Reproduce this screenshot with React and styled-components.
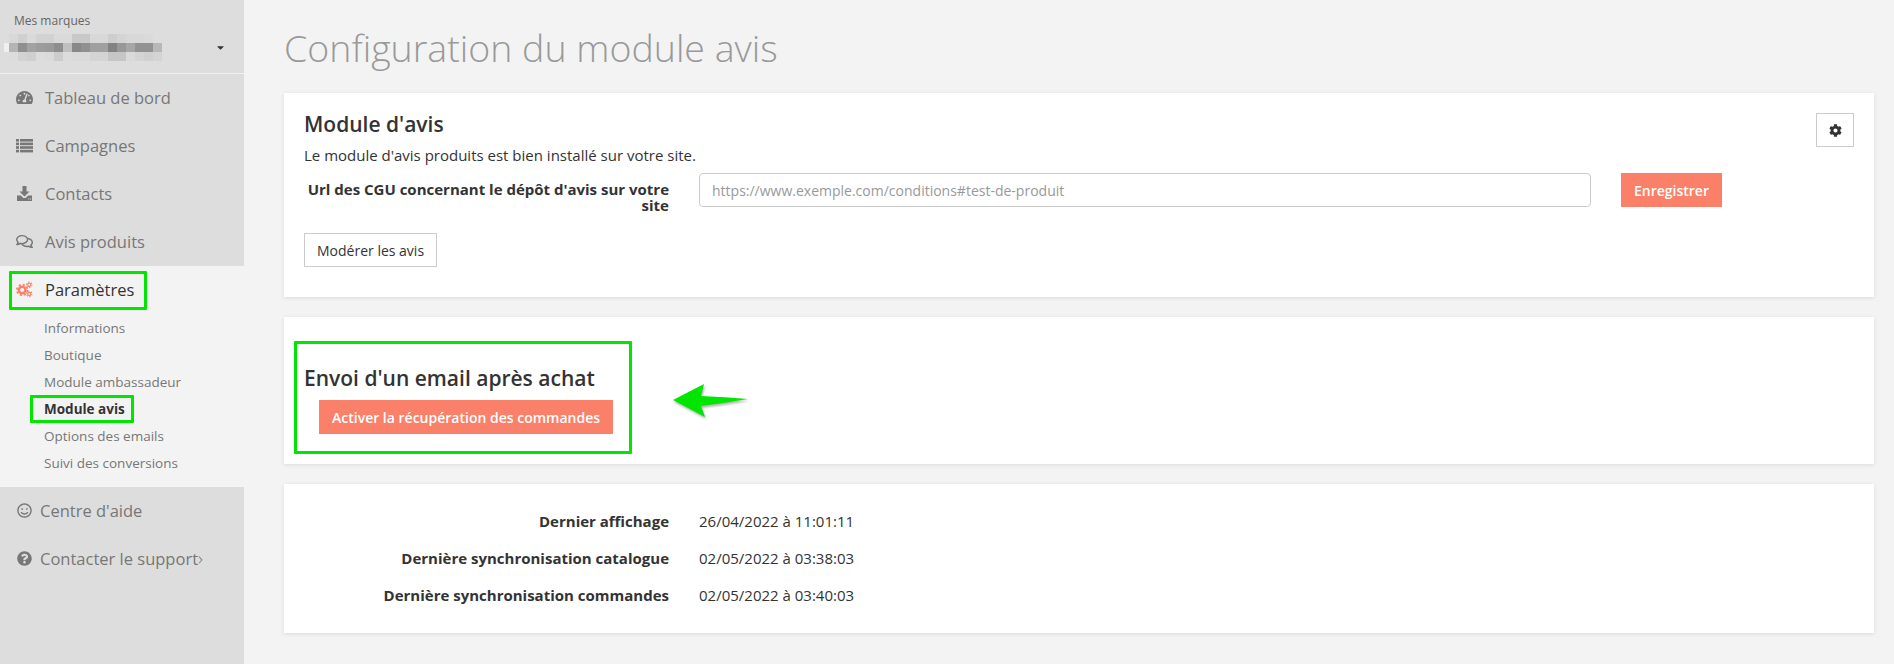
import styled, { createGlobalStyle } from "styled-components";
import {
  FaCaretDown,
  FaCog,
  FaQuestionCircle,
  FaRegComments,
  FaRegSmile,
  FaTachometerAlt,
} from "react-icons/fa";

const GREEN = "#00e600";
const SALMON = "#fa8069";

const GlobalStyle = createGlobalStyle`
  html, body {
    margin: 0;
    padding: 0;
    background: #f3f3f3;
    font-family: "Open Sans", "Liberation Sans", sans-serif;
    font-size: 15px;
    color: #333;
  }
  * { box-sizing: border-box; }
`;

const Page = styled.div`
  display: flex;
  min-height: 664px;
`;

const Sidebar = styled.aside`
  width: 244px;
  flex-shrink: 0;
  background: #ddd;
`;

const BrandBlock = styled.div`
  height: 74px;
  padding-top: 12px;
  border-bottom: 1px solid #f1f1f1;
`;

const BrandLabel = styled.div`
  padding-left: 14px;
  font-size: 12px;
  line-height: 17px;
  color: #666;
`;

const BrandRow = styled.div`
  display: flex;
  align-items: center;
  justify-content: space-between;
  height: 27px;
  margin-top: 7px;
  padding: 0 18px 4px 4px;
  color: #333;
`;

const MenuRow = styled.div`
  height: 48px;
  display: flex;
  align-items: center;
  padding: 0 0 2px ${(p) => (p.$compact ? 17 : 16)}px;
  gap: ${(p) => (p.$compact ? 8 : 12)}px;
  font-size: 16.5px;
  color: ${(p) => (p.$active ? "#333" : "#777")};
  position: relative;
  svg {
    width: ${(p) => (p.$compact ? 15 : 17)}px;
    height: ${(p) => (p.$compact ? 15 : 17)}px;
    flex-shrink: 0;
    color: ${(p) => (p.$active ? SALMON : "#777")};
  }
`;

const ActiveGroup = styled.div`
  background: #f3f3f3;
  height: 221px;
`;

const SubMenu = styled.div`
  padding-top: 1px;
`;

const SubItem = styled.div`
  height: 27px;
  line-height: 27px;
  padding-left: 44px;
  font-size: 13.5px;
  font-weight: ${(p) => (p.$active ? 700 : 400)};
  color: ${(p) => (p.$active ? "#333" : "#777")};
  position: relative;
`;

const Chevron = styled.span`
  margin-left: -8px;
  font-size: 19px;
  line-height: 1;
  font-weight: 300;
  color: #777;
`;

const Highlight = styled.span`
  position: absolute;
  border: 3px solid ${GREEN};
  border-radius: 1px;
  pointer-events: none;
  top: ${(p) => p.$top}px;
  left: ${(p) => p.$left}px;
  width: ${(p) => p.$width}px;
  height: ${(p) => p.$height}px;
`;

const Main = styled.main`
  flex: 1;
  padding: 0 20px 0 40px;
`;

const Title = styled.h1`
  margin: 0;
  height: 93px;
  padding-top: 23px;
  font-size: 37.5px;
  line-height: 50px;
  font-weight: 300;
  color: #999;
`;

const Card = styled.section`
  background: #fff;
  box-shadow: 0 1px 4px rgba(0, 0, 0, 0.1);
  padding: ${(p) => p.$padding};
  height: ${(p) => p.$height}px;
  margin-bottom: 20px;
  position: relative;
`;

const CardHeading = styled.h3`
  margin: 0;
  font-size: 21px;
  line-height: 29px;
  font-weight: 600;
  color: #333;
`;

const Description = styled.p`
  margin: 6px 0 8px;
  font-size: 15px;
  line-height: 20px;
`;

const FormRow = styled.div`
  display: flex;
  align-items: flex-start;
  height: 60px;
`;

const FieldLabel = styled.label`
  width: 365px;
  flex-shrink: 0;
  text-align: right;
  font-weight: 700;
  font-size: 15px;
  line-height: 16px;
  padding-top: 8px;
`;

const UrlInput = styled.input`
  width: 892px;
  height: 34px;
  margin-left: 30px;
  padding: 0 12px;
  border: 1px solid #ccc;
  border-radius: 4px;
  font: 14px "Open Sans", sans-serif;
  color: #333;
  &::placeholder {
    color: #999;
    opacity: 1;
  }
`;

const SalmonButton = styled.button`
  height: 34px;
  padding: 0 13px;
  margin-left: ${(p) => p.$ml || 0}px;
  border: 0;
  background: ${SALMON};
  color: #fff;
  font: 600 14px "Open Sans", sans-serif;
`;

const OutlineButton = styled.button`
  height: 34px;
  padding: 0 12px;
  border: 1px solid #ccc;
  background: #fff;
  color: #333;
  font: 14px "Open Sans", sans-serif;
`;

const GearButton = styled(OutlineButton)`
  position: absolute;
  top: 20px;
  right: 20px;
  width: 38px;
  padding: 0;
  display: flex;
  align-items: center;
  justify-content: center;
  svg {
    width: 13px;
    height: 13px;
  }
`;

const ButtonLine = styled.div`
  padding-left: 15px;
  margin-top: 7px;
`;

const ArrowMark = styled.svg`
  position: absolute;
  left: 389px;
  top: 67px;
  filter: drop-shadow(1px 2px 1px rgba(0, 0, 0, 0.3));
`;

const InfoRow = styled.div`
  display: flex;
  align-items: center;
  height: 37px;
`;

const InfoLabel = styled.div`
  width: 365px;
  text-align: right;
  font-weight: 700;
  font-size: 15px;
`;

const InfoValue = styled.div`
  margin-left: 30px;
  font-size: 15px;
`;

const mosaic = [
  ["", "#d8d8d8", "#d0d0d0", "#dadada", "#d2d2d2", "#d2d2d2", "#dadada", "#dadada", "#c8c8c8", "#c8c8c8", "#d8d8d8", "#d8d8d8", "#cecece", "#d4d4d4", "#d8d8d8", "#d8d8d8", "#dadada"],
  ["#f0f0f0", "#b4b4b4", "#8f8f8f", "#a2a2a2", "#9c9c9c", "#9a9a9a", "#8e8e8e", "#c0c0c0", "#888", "#909090", "#a0a0a0", "#a0a0a0", "#828282", "#989898", "#a6a6a6", "#929292", "#929292", "#b8b8b8"],
  ["", "#dcdcdc", "#d2d2d2", "#cfcfcf", "#dcdcdc", "#dadada", "#cccccc", "#dcdcdc", "#dadada", "#dadada", "#d4d4d4", "#d4d4d4", "#c6c6c6", "#c6c6c6", "#dadada", "#d4d4d4", "#d0d0d0", "#d4d4d4"],
];

function BlurredBrand() {
  return (
    <svg width="168" height="27" style={{ filter: "blur(0.6px)" }}>
      {mosaic.map((row, y) =>
        row.map((c, x) =>
          c ? (
            <rect
              key={`${x}-${y}`}
              x={x === 0 ? 0 : 5 + (x - 1) * 9}
              y={y * 9}
              width={x === 0 ? 5 : 9}
              height="9"
              fill={c}
            />
          ) : null
        )
      )}
    </svg>
  );
}

function ListIcon() {
  return (
    <svg viewBox="0 0 17 17" fill="currentColor">
      {[2, 5.6, 9.2, 12.8].map((y) => (
        <g key={y}>
          <rect x="0" y={y} width="3" height="2.6" />
          <rect x="4" y={y} width="13" height="2.6" />
        </g>
      ))}
    </svg>
  );
}

function DownloadIcon() {
  return (
    <svg viewBox="0 0 17 17" fill="currentColor">
      <path d="M6.5 1h4v5.5h3l-5 5-5-5h3z" />
      <path
        fillRule="evenodd"
        d="M1 10.5h3.8l2.5 2.5h2.4l2.5-2.5H16V16H1zM12.2 13.6v1h1v-1zM14 13.6v1h1v-1z"
      />
    </svg>
  );
}

function GearsIcon() {
  return (
    <svg viewBox="0 0 18 17" fill="none" stroke="currentColor">
      <circle cx="6.5" cy="9" r="3.5" strokeWidth="2.6" />
      <circle cx="6.5" cy="9" r="5.6" strokeWidth="1.8" strokeDasharray="2.2 2.2" />
      <circle cx="14" cy="3.6" r="1.7" strokeWidth="1.2" />
      <circle cx="14" cy="3.6" r="2.9" strokeWidth="1.1" strokeDasharray="1.52 1.52" />
      <circle cx="14" cy="13.2" r="1.7" strokeWidth="1.2" />
      <circle cx="14" cy="13.2" r="2.9" strokeWidth="1.1" strokeDasharray="1.52 1.52" />
    </svg>
  );
}

const topItems = [
  { label: "Tableau de bord", Icon: FaTachometerAlt },
  { label: "Campagnes", Icon: ListIcon },
  { label: "Contacts", Icon: DownloadIcon },
  { label: "Avis produits", Icon: FaRegComments },
];

const subItems = ["Informations", "Boutique", "Module ambassadeur", "Module avis", "Options des emails", "Suivi des conversions"];

const infos = [
  ["Dernier affichage", "26/04/2022 à 11:01:11"],
  ["Dernière synchronisation catalogue", "02/05/2022 à 03:38:03"],
  ["Dernière synchronisation commandes", "02/05/2022 à 03:40:03"],
];

export default function App() {
  return (
    <>
      <GlobalStyle />
      <Page>
        <Sidebar>
          <BrandBlock>
            <BrandLabel>Mes marques</BrandLabel>
            <BrandRow>
              <BlurredBrand />
              <FaCaretDown size={11} />
            </BrandRow>
          </BrandBlock>
          {topItems.map(({ label, Icon }) => (
            <MenuRow key={label}>
              <Icon />
              {label}
            </MenuRow>
          ))}
          <ActiveGroup>
            <MenuRow $active>
              <GearsIcon />
              Paramètres
              <Highlight $top={5} $left={9} $width={138} $height={39} />
            </MenuRow>
            <SubMenu>
              {subItems.map((s) => (
                <SubItem key={s} $active={s === "Module avis"}>
                  {s}
                  {s === "Module avis" && <Highlight $top={-1} $left={30} $width={104} $height={28} />}
                </SubItem>
              ))}
            </SubMenu>
          </ActiveGroup>
          <MenuRow $compact>
            <FaRegSmile />
            Centre d'aide
          </MenuRow>
          <MenuRow $compact>
            <FaQuestionCircle />
            Contacter le support
            <Chevron>›</Chevron>
          </MenuRow>
        </Sidebar>
        <Main>
          <Title>Configuration du module avis</Title>
          <Card $padding="17px 20px" $height={204}>
            <GearButton>
              <FaCog />
            </GearButton>
            <CardHeading>Module d'avis</CardHeading>
            <Description>Le module d'avis produits est bien installé sur votre site.</Description>
            <FormRow>
              <FieldLabel>Url des CGU concernant le dépôt d'avis sur votre site</FieldLabel>
              <UrlInput placeholder="https://www.exemple.com/conditions#test-de-produit" />
              <SalmonButton $ml={30}>Enregistrer</SalmonButton>
            </FormRow>
            <OutlineButton>Modérer les avis</OutlineButton>
          </Card>
          <Card $padding="47px 20px 0" $height={147}>
            <CardHeading>Envoi d'un email après achat</CardHeading>
            <ButtonLine>
              <SalmonButton>Activer la récupération des commandes</SalmonButton>
            </ButtonLine>
            <Highlight $top={24} $left={10} $width={338} $height={113} />
            <ArrowMark width="76" height="34" viewBox="0 0 76 34">
              <path d="M0 16 L31 0 L28 12 Q52 13 75 15 Q52 19 28 22 L32 33 Z" fill={GREEN} />
            </ArrowMark>
          </Card>
          <Card $padding="18px 20px" $height={149}>
            {infos.map(([k, v]) => (
              <InfoRow key={k}>
                <InfoLabel>{k}</InfoLabel>
                <InfoValue>{v}</InfoValue>
              </InfoRow>
            ))}
          </Card>
        </Main>
      </Page>
    </>
  );
}
